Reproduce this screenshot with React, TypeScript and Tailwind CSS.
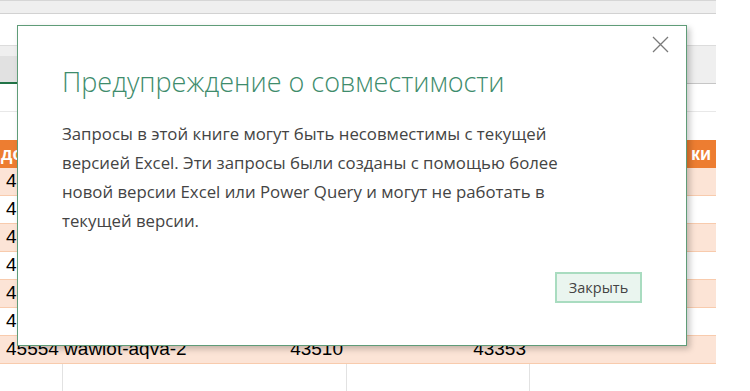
export default function App() {
  const rows = [
    { left: "4", mid: "", right: "" },
    { left: "4", mid: "", right: "" },
    { left: "4", mid: "", right: "" },
    { left: "4", mid: "", right: "" },
    { left: "4", mid: "", right: "" },
    { left: "4", mid: "", right: "" },
    { left: "45554 wawiot-aqva-2", mid: "43510", right: "43353" },
  ]

  return (
    <div className="relative w-[750px] h-[391px] overflow-hidden bg-white" style={{ fontFamily: '"Open Sans", "Noto Sans", sans-serif' }}>
      {/* spreadsheet behind the dialog */}
      <div className="w-[716px] flex flex-col">
        <div className="h-[14px] bg-[#efefef] border-t border-[#d6d6d6] border-b border-b-[#d2d2d2]" />
        <div className="h-[31px] bg-white" />
        <div className="h-[39px] flex border-t border-[#dcdcdc]">
          <div className="w-[17px] flex flex-col border-b-2 border-[#217346]">
            <div className="h-[10px] bg-[#efefef]" />
            <div className="flex-1 bg-[#e1e1e1]" />
          </div>
          <div className="flex-1 bg-[#efefef] border-b border-[#c6c6c6]" />
        </div>
        <div className="h-[28px] border-b border-[#e8e8e8]" />
        <div className="h-[28px]" />
        <div className="h-[28px] bg-[#ed7d31] flex items-center justify-between text-white font-bold text-[18px] px-[1px]" style={{ fontFamily: '"Liberation Sans", sans-serif' }}>
          <span>до</span>
          <span className="mr-[4px]">ки</span>
        </div>
        {rows.map((r, i) => (
          <div
            key={i}
            className={`h-[28px] flex items-center border-b border-[#f8cbad] text-[19px] text-black ${i % 2 === 0 ? "bg-[#fce4d6]" : "bg-white"}`}
            style={{ fontFamily: '"Liberation Sans", sans-serif' }}
          >
            <div className="w-[63px] pl-[6px] whitespace-nowrap">{r.left}</div>
            <div className="w-[284px] pr-[4px] text-right">{r.mid}</div>
            <div className="w-[183px] pr-[4px] text-right">{r.right}</div>
            <div className="flex-1" />
          </div>
        ))}
        <div className="h-[30px] flex">
          <div className="w-[63px] border-r border-[#e2e2e2]" />
          <div className="w-[284px] border-r border-[#e2e2e2]" />
          <div className="w-[183px] border-r border-[#e2e2e2]" />
        </div>
      </div>

      {/* compatibility dialog */}
      <div className="absolute left-[17px] top-[25px] w-[670px] h-[321px] bg-white border border-[#5f9c78] shadow-[3px_3px_6px_rgba(0,0,0,0.22)] flex flex-col">
        <button className="absolute right-[17px] top-[9px] w-[18px] h-[18px] flex items-center justify-center">
          <svg width="17" height="17" viewBox="0 0 17 17" fill="none" stroke="#7a7a7a" strokeWidth="1.3">
            <path d="M1 1 L16 16 M16 1 L1 16" />
          </svg>
        </button>
        <h1 className="mt-[38px] ml-[44px] text-[27px] leading-[36px] font-light text-[#3e8c6c] whitespace-nowrap">
          Предупреждение о совместимости
        </h1>
        <p className="mt-[19px] ml-[44px] w-[530px] text-[16.8px] leading-[29px] text-[#444444]">
          Запросы в этой книге могут быть несовместимы с текущей версией Excel. Эти запросы были созданы с помощью более новой версии Excel или Power Query и могут не работать в текущей версии.
        </p>
        <div className="flex-1" />
        <div className="flex justify-end pr-[44px] pb-[42px]">
          <button className="w-[87px] h-[31px] bg-[#eaf5ef] border-2 border-[#a9dcc0] text-[14.5px] text-[#444444]">
            Закрыть
          </button>
        </div>
      </div>
    </div>
  )
}
